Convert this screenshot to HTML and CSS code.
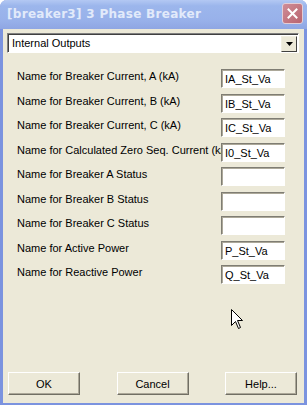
FILE: index.html
```html
<!DOCTYPE html>
<html lang="en">
<head>
    <meta charset="UTF-8">
    <title>[breaker3] 3 Phase Breaker</title>
    <link rel="stylesheet" href="styles.css">
</head>
<body>

    <div class="window">
        <!-- Title bar -->
        <div class="titlebar">
            <span class="title">[breaker3] 3 Phase Breaker</span>
            <span class="close-btn">
                <svg width="11" height="11" viewBox="0 0 11 11">
                    <path d="M1.5 1.5 L9.5 9.5 M9.5 1.5 L1.5 9.5" stroke="#fff" stroke-width="2" stroke-linecap="square"/>
                </svg>
            </span>
        </div>

        <div class="content">
            <div class="dropdown">
                <span class="dropdown-text">Internal Outputs</span>
                <span class="dropdown-arrow">
                    <svg width="7" height="4" viewBox="0 0 7 4"><path d="M0 0 H7 L3.5 4 Z" fill="#000"/></svg>
                </span>
            </div>

            <div class="fields">
                <div class="row">
                    <span class="label">Name for Breaker Current, A (kA)</span>
                    <input class="field" type="text" value="IA_St_Va">
                </div>
                <div class="row">
                    <span class="label">Name for Breaker Current, B (kA)</span>
                    <input class="field" type="text" value="IB_St_Va">
                </div>
                <div class="row">
                    <span class="label">Name for Breaker Current, C (kA)</span>
                    <input class="field" type="text" value="IC_St_Va">
                </div>
                <div class="row">
                    <span class="label">Name for Calculated Zero Seq. Current (kA)</span>
                    <input class="field" type="text" value="I0_St_Va">
                </div>
                <div class="row">
                    <span class="label">Name for Breaker A Status</span>
                    <input class="field" type="text" value="">
                </div>
                <div class="row">
                    <span class="label">Name for Breaker B Status</span>
                    <input class="field" type="text" value="">
                </div>
                <div class="row">
                    <span class="label">Name for Breaker C Status</span>
                    <input class="field" type="text" value="">
                </div>
                <div class="row">
                    <span class="label">Name for Active Power</span>
                    <input class="field" type="text" value="P_St_Va">
                </div>
                <div class="row">
                    <span class="label">Name for Reactive Power</span>
                    <input class="field" type="text" value="Q_St_Va">
                </div>
            </div>

            <div class="buttons">
                <button class="button">OK</button>
                <button class="button">Cancel</button>
                <button class="button">Help...</button>
            </div>
        </div>

        <!-- Mouse pointer over the dialog -->
        <svg class="cursor" width="13" height="21" viewBox="0 0 13 21">
            <path d="M0.5 0.5 V16.5 L4.5 12.5 L7.5 19.5 L9.5 18.5 L6.5 11.5 H11.5 Z" fill="#fff" stroke="#000" stroke-width="1"/>
        </svg>
    </div>

</body>
</html>
```

FILE: styles.css
```css
body {
    margin: 0;
    background-color: #fff;
    font-family: "Liberation Sans", Arial, sans-serif;
    font-size: 11px;
    color: #000;
}

.window {
    position: relative;
    width: 301px;
    height: 374px;
    border: 3px solid #7b93df;
    border-top: none;
    background-color: #ece9d8;
    padding-top: 29px;
    border-radius: 7px 7px 0 0;
}

/* Title bar (inactive XP style) */
.titlebar {
    position: absolute;
    top: 0;
    left: -3px;
    right: -3px;
    height: 29px;
    border-radius: 7px 7px 0 0;
    background: linear-gradient(#b3c8f3 0%, #9cb6ec 20%, #98b1ea 70%, #8fa6e3 100%);
    display: flex;
    align-items: center;
    justify-content: space-between;
    padding: 0 4px 0 7px;
    box-sizing: border-box;
}

.title {
    font-family: "DejaVu Sans", sans-serif;
    font-weight: bold;
    font-size: 12px;
    color: #e2eafa;
    letter-spacing: 0.3px;
    margin-top: -1px;
}

.close-btn {
    width: 19px;
    height: 19px;
    border: 1px solid #e3cdd6;
    border-radius: 3px;
    background: linear-gradient(135deg, #cf8d98, #b9646f);
    display: flex;
    align-items: center;
    justify-content: center;
    margin-top: -2px;
}

.content {
    display: flex;
    flex-direction: column;
    height: 100%;
    padding: 4px 5px 8px 4px;
    box-sizing: border-box;
}

/* Combo box */
.dropdown {
    display: flex;
    align-items: center;
    justify-content: space-between;
    height: 20px;
    box-sizing: border-box;
    background-color: #fff;
    border: 1px solid;
    border-color: #808080 #fff #fff #808080;
    box-shadow: inset 1px 1px 0 #404040;
    padding: 0 1px 0 4px;
}

.dropdown-arrow {
    width: 16px;
    height: 16px;
    box-sizing: border-box;
    background-color: #ece9d8;
    border: 1px solid;
    border-color: #f1efe2 #404040 #404040 #f1efe2;
    display: flex;
    align-items: center;
    justify-content: center;
    margin-top: 1px;
}

/* Field rows */
.fields {
    margin-top: 16px;
    padding-left: 10px;
}

.row {
    display: flex;
    height: 24.5px;
    align-items: flex-start;
}

.label {
    width: 204px;
    overflow: hidden;
    white-space: nowrap;
    line-height: 13px;
    padding-top: 1px;
}

.field {
    width: 64px;
    height: 19px;
    box-sizing: border-box;
    margin: 0;
    padding: 1px 3px 0;
    font-family: "Liberation Sans", Arial, sans-serif;
    font-size: 11px;
    color: #000;
    background-color: #fff;
    border: 1px solid;
    border-color: #7f7d73 #fff #fff #7f7d73;
    box-shadow: inset 1px 1px 0 #aca899;
    outline: none;
}

/* Buttons */
.buttons {
    margin-top: auto;
    display: flex;
    justify-content: space-between;
    padding: 0 2px 0 1px;
}

.button {
    width: 72px;
    height: 23px;
    font-family: "Liberation Sans", Arial, sans-serif;
    font-size: 11px;
    color: #000;
    background-color: #ece9d8;
    border: 1px solid;
    border-color: #fff #716f64 #716f64 #fff;
    box-shadow: inset -1px -1px 0 #aca899;
    padding: 0;
}

.cursor {
    position: absolute;
    left: 228px;
    top: 309px;
}
```
